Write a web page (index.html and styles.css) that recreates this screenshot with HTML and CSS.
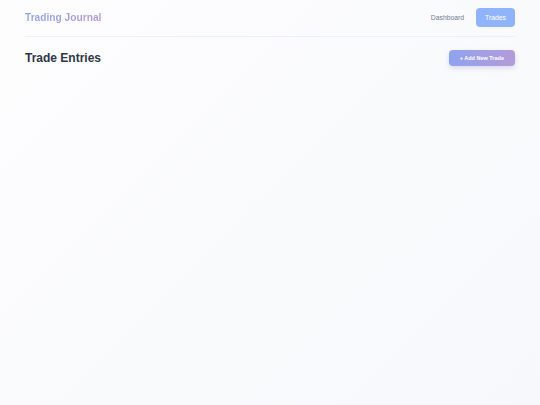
FILE: index.html
```html
<!DOCTYPE html>
<html lang="en">
<head>
    <meta charset="UTF-8">
    <meta name="viewport" content="width=device-width, initial-scale=1.0">
    <title>Trading Journal</title>
    <link rel="stylesheet" href="styles.css">
</head>
<body>

    <div class="container">
        <!-- Top navigation -->
        <header class="navbar">
            <div class="logo">Trading Journal</div>
            <nav class="nav-links">
                <a href="#" class="nav-link">Dashboard</a>
                <a href="#" class="nav-link active">Trades</a>
            </nav>
        </header>

        <!-- Trades page -->
        <main>
            <div class="page-header">
                <h1 class="page-title">Trade Entries</h1>
                <button class="add-button">+ Add New Trade</button>
            </div>
        </main>
    </div>

</body>
</html>
```

FILE: styles.css
```css
/* Basic Reset */
* {
    margin: 0;
    padding: 0;
    box-sizing: border-box;
}

body {
    font-family: 'Liberation Sans', Arial, sans-serif;
    background: linear-gradient(135deg, #fdfdfe 0%, #f7f8fb 100%);
    color: #2d3748;
    min-height: 100vh;
}

.container {
    padding: 0 25px;
}

/* Header bar */
.navbar {
    display: flex;
    justify-content: space-between;
    align-items: center;
    height: 37px;
    padding: 0 0 1px;
    border-bottom: 1px solid #eef0f4;
}

.logo {
    font-size: 10.2px;
    font-weight: bold;
    background: linear-gradient(90deg, #8ea7ee, #b39bd6);
    -webkit-background-clip: text;
    background-clip: text;
    color: transparent;
}

.nav-links {
    display: flex;
    align-items: center;
    gap: 12px;
}

.nav-link {
    font-size: 6.8px;
    color: #718096;
    text-decoration: none;
}

.nav-link.active {
    display: block;
    background-color: #90b4fb;
    color: white;
    line-height: 8px;
    padding: 5.5px 9px;
    border-radius: 4px;
}

/* Page title row */
.page-header {
    display: flex;
    justify-content: space-between;
    align-items: center;
    padding-top: 13px;
}

.page-title {
    font-size: 12px;
    font-weight: bold;
    color: #2d3748;
}

.add-button {
    font-family: inherit;
    font-size: 5.5px;
    font-weight: bold;
    color: white;
    border: none;
    padding: 5px 11px;
    border-radius: 4px;
    background: linear-gradient(90deg, #8fa3f0, #b49bd8);
    box-shadow: 0 2px 5px rgba(120, 110, 200, 0.25);
    cursor: pointer;
}
```
